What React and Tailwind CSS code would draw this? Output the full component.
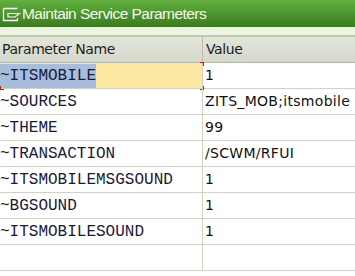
const rows = [
  { name: '~ITSMOBILE', value: '1', active: true },
  { name: '~SOURCES', value: 'ZITS_MOB;itsmobile' },
  { name: '~THEME', value: '99' },
  { name: '~TRANSACTION', value: '/SCWM/RFUI' },
  { name: '~ITSMOBILEMSGSOUND', value: '1' },
  { name: '~BGSOUND', value: '1' },
  { name: '~ITSMOBILESOUND', value: '1' },
  { name: '', value: '' },
];

function TitleIcon() {
  return (
    <svg width="20" height="16" viewBox="0 0 20 16" className="shrink-0">
      <path d="M2.5 2.5 H16.5 M2.5 2.5 V14.5 H16.5 V12" stroke="#fff" strokeWidth="1.3" fill="none" />
      <path d="M7 7.5 H18.5 L14 11 H7 Z" stroke="#fff" strokeWidth="1.2" fill="none" />
    </svg>
  );
}

export default function App() {
  return (
    <div className="w-[355px] h-[276px] overflow-hidden bg-white">
      <div className="h-[27px] flex items-center gap-[1px] pl-[1px] bg-gradient-to-b from-[#62b040] to-[#3a7b1e]">
        <TitleIcon />
        <span className="text-[15.5px] leading-none text-[#f4fbe6] font-['Liberation_Sans',sans-serif] tracking-[-0.55px]">
          Maintain Service Parameters
        </span>
      </div>
      <div className="h-[8px] bg-[#eef3e6]" />
      <div className="h-[2px] bg-[#b9cfa3]" />
      <div className="h-[26px] flex bg-gradient-to-b from-[#e2e5da] to-[#d5d8cc] border-b border-[#b3b7a6] font-['DejaVu_Sans',sans-serif] text-[14px] text-[#1d1d1d] tracking-[-0.4px]">
        <div className="w-[203px] pl-[2px] flex items-center border-r border-[#b9bcae]">Parameter Name</div>
        <div className="flex-1 pl-[3px] flex items-center">Value</div>
      </div>
      {rows.map((r, i) => (
        <div key={i} className="h-[26px] flex border-b border-[#cfd2c4]">
          <div
            className={
              'relative w-[203px] border-r border-[#cfd2c4] flex items-center font-["Liberation_Mono",monospace] text-[16px] text-[#1a1a3a] ' +
              (r.active ? 'bg-[#fde9a2]' : '')
            }
          >
            {r.active ? (
              <>
                <span className="bg-[#a6bddb] h-[24px] flex items-center">{r.name}</span>
                <span className="absolute right-[-2px] top-[-1px] w-[4px] h-[4px] border-t border-r border-[#c0201a]" />
                <span className="absolute right-[-2px] bottom-[-2px] w-[4px] h-[4px] border-b border-r border-[#c0201a]" />
                <span className="absolute left-0 bottom-[-2px] w-[4px] h-[4px] border-b border-l border-[#c0201a]" />
              </>
            ) : (
              r.name
            )}
          </div>
          <div className="flex-1 pl-[2px] flex items-center font-['DejaVu_Sans',sans-serif] text-[14px] text-[#111] tracking-[0.3px]">
            {r.value}
          </div>
        </div>
      ))}
    </div>
  );
}
